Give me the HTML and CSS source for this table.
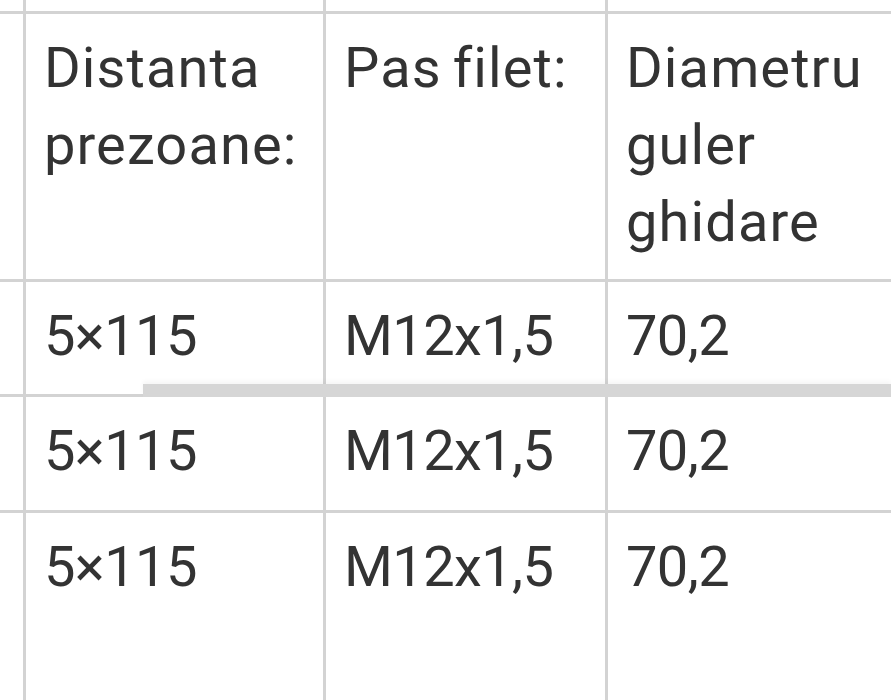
FILE: index.html
```html
<!DOCTYPE html>
<html lang="ro">
<head>
<meta charset="utf-8">
<title>Tabel</title>
<link rel="stylesheet" href="styles.css">
</head>
<body>
<div class="viewport">
  <table class="specs">
    <tbody>
      <tr class="row-prev">
        <td class="c0"></td><td class="c1"></td><td class="c2"></td><td class="c3"></td>
      </tr>
      <tr class="row-head">
        <td class="c0"></td>
        <td class="c1">Distanta prezoane:</td>
        <td class="c2">Pas filet:</td>
        <td class="c3">Diametru guler ghidare</td>
      </tr>
      <tr class="row-data">
        <td class="c0"></td>
        <td class="c1">5×115</td>
        <td class="c2">M12x1,5</td>
        <td class="c3">70,2</td>
      </tr>
      <tr class="row-data row-b">
        <td class="c0"></td>
        <td class="c1">5×115</td>
        <td class="c2">M12x1,5</td>
        <td class="c3">70,2</td>
      </tr>
      <tr class="row-data row-last">
        <td class="c0"></td>
        <td class="c1">5×115</td>
        <td class="c2">M12x1,5</td>
        <td class="c3">70,2</td>
      </tr>
    </tbody>
  </table>
  <div class="scroll-thumb"></div>
</div>
</body>
</html>
```

FILE: styles.css
```css
html, body {
  margin: 0;
  padding: 0;
  background: #ffffff;
}

.viewport {
  position: relative;
  width: 891px;
  height: 700px;
  overflow: hidden;
  background: #ffffff;
}

.specs {
  border-collapse: separate;
  border-spacing: 0;
  table-layout: fixed;
  width: 1028px;
  margin: -86px 0 0 -100px;
  font-family: Roboto, "Noto Sans", sans-serif;
  font-size: 56px;
  line-height: 77px;
  color: #333333;
}

.specs td {
  box-sizing: border-box;
  vertical-align: top;
  padding: 16px 6px 0 18px;
  border-right: 3px solid #d3d3d3;
  border-bottom: 3px solid #d3d3d3;
}

.row-head td {
  letter-spacing: 1.1px;
  word-spacing: -4px;
  padding-left: 18px;
}

.row-data td {
  letter-spacing: -0.6px;
}

.c0 { width: 126px; }
.c1 { width: 300px; }
.c2 { width: 282px; }
.c3 { width: 320px; }

.row-prev td { height: 100px; }
.row-head td { height: 268px; }
.row-data td { height: 115px; }
.row-b td { height: 116px; }
.row-last td { height: 240px; }

.scroll-thumb {
  position: absolute;
  left: 143px;
  top: 384px;
  width: 748px;
  height: 13px;
  background: #d6d6d6;
  box-shadow: 0 -3px 4px rgba(0, 0, 0, 0.04);
}
```
